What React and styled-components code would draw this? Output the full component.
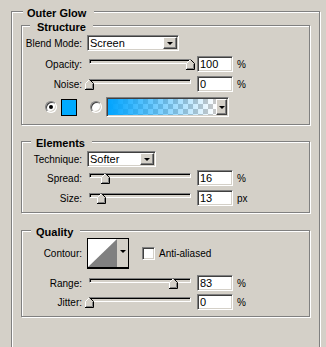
import React from 'react';
import styled, { createGlobalStyle } from 'styled-components';

const BG = '#D4D0C8';

const GlobalStyle = createGlobalStyle`
  html, body { margin: 0; padding: 0; background: ${BG}; }
  body { font-family: "Liberation Sans", Arial, sans-serif; font-size: 10px; color: #000; }
`;

const Page = styled.div`
  box-sizing: border-box;
  width: 326px;
  height: 347px;
  overflow: hidden;
  background: ${BG};
  padding: 11px 0 0 11px;
  font-family: "Liberation Sans", Arial, sans-serif;
  font-size: 10px;
  color: #000;
`;

const Group = styled.section`
  box-sizing: border-box;
  display: flex;
  flex-direction: column;
  width: ${p => p.$w}px;
  height: ${p => (p.$h ? `${p.$h}px` : 'auto')};
  margin-top: ${p => p.$mt || 0}px;
  padding: ${p => p.$pad || '0'};
  border: 1px solid #808080;
  box-shadow: inset 1px 1px 0 #fff, 1px 1px 0 #fff;
`;

const Legend = styled.div`
  align-self: flex-start;
  margin: -5px 0 ${p => p.$mb}px ${p => p.$ml}px;
  padding: 0 ${p => p.$pr}px 0 ${p => p.$pl}px;
  background: ${BG};
  font-weight: bold;
  font-size: 11px;
  line-height: 13px;
  white-space: nowrap;
`;

const Row = styled.div`
  display: flex;
  align-items: center;
  height: ${p => p.$h || 16}px;
  margin-top: ${p => p.$mt || 0}px;
  padding-left: ${p => p.$pl || 0}px;
`;

const Label = styled.div`
  width: 60px;
  margin-right: 5px;
  text-align: right;
  white-space: nowrap;
`;

const Combo = styled.div`
  box-sizing: border-box;
  display: flex;
  width: ${p => p.$w}px;
  height: 16px;
  padding: 1px;
  background: #fff;
  border-style: solid;
  border-width: 1px;
  border-color: #808080 #fff #fff #808080;
  box-shadow: inset 1px 1px 0 #404040, inset -1px -1px 0 ${BG};
`;

const ComboText = styled.div`
  flex: 1;
  padding-left: 1px;
  font-size: 11px;
  line-height: 12px;
`;

const DropButton = styled.div`
  box-sizing: border-box;
  display: flex;
  align-items: center;
  justify-content: center;
  width: ${p => p.$w || 14}px;
  background: ${BG};
  border-style: solid;
  border-width: 1px;
  border-color: #fff #404040 #404040 #fff;
  box-shadow: inset -1px -1px 0 #808080;
`;

const Arrow = styled.span`
  width: 0;
  height: 0;
  border-left: 3px solid transparent;
  border-right: 3px solid transparent;
  border-top: 3px solid #000;
  margin-top: ${p => p.$mt || 0}px;
`;

const SliderBox = styled.div`
  position: relative;
  align-self: flex-start;
  width: 102px;
  height: 11px;
  margin: 3px 6px 0 2px;
`;

const Track = styled.div`
  box-sizing: border-box;
  width: 100%;
  height: 5px;
  background: ${BG};
  border-style: solid;
  border-width: 1px;
  border-color: #808080 #fff #fff #808080;
  box-shadow: inset 1px 1px 0 #000;
`;

const ThumbSvg = styled.svg`
  position: absolute;
  top: 0;
  left: ${p => Math.round(p.$pos * 101 - 4)}px;
  display: block;
`;

const NumInput = styled.input`
  box-sizing: border-box;
  width: 36px;
  height: 16px;
  margin: 0;
  padding: 0 0 0 2px;
  background: #fff;
  border-style: solid;
  border-width: 1px;
  border-color: #808080 #fff #fff #808080;
  box-shadow: inset 1px 1px 0 #404040, inset -1px -1px 0 ${BG};
  font-family: "Liberation Sans", Arial, sans-serif;
  font-size: 11px;
  color: #000;
  outline: none;
`;

const Unit = styled.span`
  margin-left: 4px;
`;

const Radio = styled.span`
  box-sizing: border-box;
  position: relative;
  display: inline-block;
  width: 12px;
  height: 12px;
  border-radius: 50%;
  background: #fff;
  border: 1px solid;
  border-color: #808080 #fff #fff #808080;
  box-shadow: inset 1px 1px 0 #404040, inset -1px -1px 0 ${BG};
  &::after {
    content: '';
    display: ${p => (p.$on ? 'block' : 'none')};
    position: absolute;
    left: 3px;
    top: 3px;
    width: 4px;
    height: 4px;
    border-radius: 50%;
    background: #000;
  }
`;

const Swatch = styled.div`
  box-sizing: border-box;
  width: 16px;
  height: 17px;
  margin: 0 13px 0 4px;
  background: #00aaff;
  border: 1px solid #000;
`;

const GradientPicker = styled.div`
  box-sizing: border-box;
  display: flex;
  width: 123px;
  height: 20px;
  margin-left: 4px;
  padding: 1px;
  border-style: solid;
  border-width: 1px;
  border-color: #808080 #fff #fff #808080;
  box-shadow: inset 1px 1px 0 #404040, inset -1px -1px 0 ${BG};
  background: ${BG};
`;

const GradientBar = styled.div`
  flex: 1;
  background-image: linear-gradient(to right, rgba(0, 164, 255, 1), rgba(0, 164, 255, 0)),
    repeating-conic-gradient(#c8c8c8 0% 25%, #ffffff 0% 50%);
  background-size: 100% 100%, 10px 10px;
`;

const ContourPicker = styled.div`
  box-sizing: border-box;
  display: flex;
  width: 42px;
  height: 31px;
  border: 1px solid #000;
  border-bottom-width: 2px;
  background: ${BG};
`;

const ContourPreview = styled.svg`
  display: block;
  flex: none;
`;

const ContourArrowStrip = styled.div`
  flex: 1;
  display: flex;
  justify-content: center;
  align-items: center;
`;

const Check = styled.span`
  box-sizing: border-box;
  display: inline-block;
  width: 13px;
  height: 13px;
  margin: 0 4px 0 13px;
  background: #fff;
  border-style: solid;
  border-width: 1px;
  border-color: #808080 #fff #fff #808080;
  box-shadow: inset 1px 1px 0 #404040, inset -1px -1px 0 ${BG};
`;

function Thumb({ pos }) {
  return (
    <ThumbSvg $pos={pos} width="9" height="11" viewBox="0 0 9 11">
      <polygon points="4.5,0.5 8.5,4.5 8.5,10.5 0.5,10.5 0.5,4.5" fill={BG} />
      <polyline points="0.5,10 0.5,4.5 4.5,0.5" fill="none" stroke="#fff" strokeWidth="1" />
      <polyline points="4.5,0.5 8.5,4.5 8.5,10.5 0,10.5" fill="none" stroke="#000" strokeWidth="1" />
      <polyline points="7.5,5 7.5,9.5 1,9.5" fill="none" stroke="#808080" strokeWidth="1" />
    </ThumbSvg>
  );
}

function SliderRow({ label, pos, value, unit, mt }) {
  return (
    <Row $mt={mt}>
      <Label>{label}</Label>
      <SliderBox>
        <Track />
        <Thumb pos={pos} />
      </SliderBox>
      <NumInput readOnly defaultValue={value} />
      <Unit>{unit}</Unit>
    </Row>
  );
}

function Select({ label, value, width }) {
  return (
    <Row>
      <Label>{label}</Label>
      <Combo $w={width}>
        <ComboText>{value}</ComboText>
        <DropButton>
          <Arrow />
        </DropButton>
      </Combo>
    </Row>
  );
}

export default function App() {
  return (
    <>
      <GlobalStyle />
      <Page>
        <Group $w={309} $h={400} $pad="0 9px">
          <Legend $ml={2} $pl={4} $pr={8} $mb={5}>Outer Glow</Legend>

          <Group $w={289} $pad="0 0 7px 0">
            <Legend $ml={8} $pl={7} $pr={7} $mb={1}>Structure</Legend>
            <Select label="Blend Mode:" value="Screen" width={92} />
            <SliderRow label="Opacity:" pos={1} value="100" unit="%" mt={5} />
            <SliderRow label="Noise:" pos={0} value="0" unit="%" mt={4} />
            <Row $h={20} $mt={5} $pl={23}>
              <Radio $on />
              <Swatch />
              <Radio />
              <GradientPicker>
                <GradientBar />
                <DropButton $w={11}>
                  <Arrow />
                </DropButton>
              </GradientPicker>
            </Row>
          </Group>

          <Group $w={289} $mt={16} $pad="0 0 6px 0">
            <Legend $ml={9} $pl={5} $pr={7} $mb={1}>Elements</Legend>
            <Select label="Technique:" value="Softer" width={69} />
            <SliderRow label="Spread:" pos={0.16} value="16" unit="%" mt={3} />
            <SliderRow label="Size:" pos={0.115} value="13" unit="px" mt={4} />
          </Group>

          <Group $w={289} $mt={17} $pad="0 0 6px 0">
            <Legend $ml={9} $pl={5} $pr={7} $mb={-1}>Quality</Legend>
            <Row $h={31}>
              <Label>Contour:</Label>
              <ContourPicker>
                <ContourPreview width="29" height="28" viewBox="0 0 29 28">
                  <rect x="0" y="0" width="29" height="28" fill="#fff" />
                  <polygon points="0,28 29,0 29,28" fill="#808080" />
                </ContourPreview>
                <ContourArrowStrip>
                  <Arrow $mt={-4} />
                </ContourArrowStrip>
              </ContourPicker>
              <Check />
              <span>Anti-aliased</span>
            </Row>
            <SliderRow label="Range:" pos={0.83} value="83" unit="%" mt={6} />
            <SliderRow label="Jitter:" pos={0} value="0" unit="%" mt={3} />
          </Group>
        </Group>
      </Page>
    </>
  );
}
